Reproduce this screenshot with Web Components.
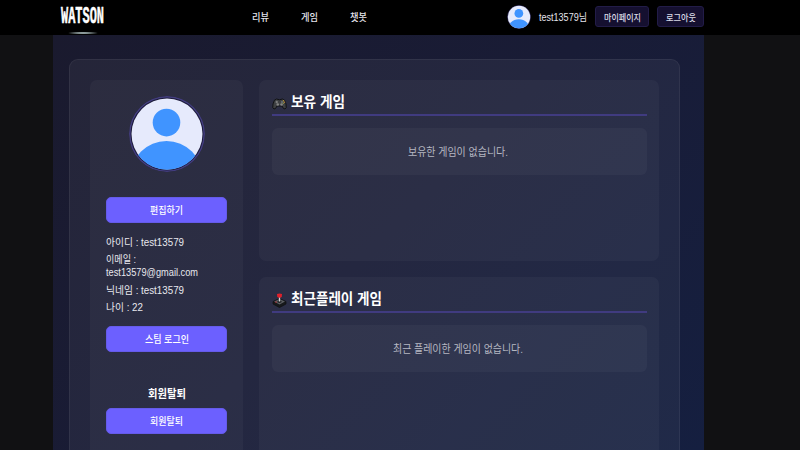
<!DOCTYPE html>
<html lang="ko">
<head>
<meta charset="utf-8">
<title>WATSON</title>
<style>
body{margin:0;width:800px;height:450px;overflow:hidden;background:#111113;color:#e4e4ec;font-family:"Liberation Sans","Noto Sans CJK KR",sans-serif}
</style>
</head>
<body>
<watson-app></watson-app>
<script>
const define = (name, html, setup) => customElements.define(name, class extends HTMLElement {
  connectedCallback() {
    if (this.shadowRoot) return;
    const t = document.createElement('template');
    t.innerHTML = html;
    this.attachShadow({mode: 'open'}).append(t.content.cloneNode(true));
    if (setup) setup(this, this.shadowRoot);
  }
});

// A line of text condensed horizontally to the width in "w".
define('fit-text', `<style>
:host{display:inline-block;flex:none;white-space:nowrap;line-height:14px;height:14px}
span{display:inline-block;transform-origin:0 50%;line-height:inherit}
</style><span><slot></slot></span>`, (el, root) => {
  const w = +el.getAttribute('w'), s = root.querySelector('span');
  el.style.width = w + 'px';
  s.style.transform = `translateY(1px) scale(${w / s.getBoundingClientRect().width},${el.getAttribute('sy') || 1})`;
});

define('user-avatar', `<style>
:host{display:block;flex:none;box-sizing:border-box;border-radius:50%;overflow:hidden}
svg{display:block;width:100%;height:100%}
</style><svg viewBox="0 0 76 76">
<defs><clipPath id="c"><circle cx="38" cy="38" r="35.7"/></clipPath></defs>
<circle cx="38" cy="38" r="37.2" fill="#1c1b3a" stroke="#433d80" stroke-width="1.5"/>
<circle cx="38" cy="38" r="35.5" fill="#e6eafc"/>
<g clip-path="url(#c)" fill="#4094ff"><circle cx="37.500" cy="26.6" r="13.8"/><circle cx="37.500" cy="81" r="36"/></g>
</svg>`);

define('nav-button', `<style>
:host{display:flex;box-sizing:border-box;height:21px;align-items:center;justify-content:center;background:#151030;border:1px solid #221c48;border-radius:3px;color:#dcdce8;font-size:9.5px;font-weight:500}
</style><slot></slot>`);

define('site-header', `<style>
:host{display:flex;position:relative;box-sizing:border-box;height:35px;background:#000;align-items:center;flex:none}
.logo{margin-left:60.5px;width:43.5px;height:20px;margin-top:-5px;color:#fff;font:bold 14px/20px "Liberation Mono",monospace}
.logo fit-text{height:20px;line-height:20px;-webkit-text-stroke:.3px #fff}
.glow{position:absolute;left:66px;top:32px;width:34px;height:2px;background:radial-gradient(closest-side,#fff,#8c9a9a 50%,transparent)}
nav{display:flex;margin-left:148px;margin-top:-1px;gap:32px;font-size:10px;width:255px;font-weight:500}
.user{display:flex;align-items:center;gap:8px;margin-top:-2px}
user-avatar{width:24px;height:24px}
.name{font-size:10px}
</style>
<div class="logo"><fit-text w="43" sy="1.75">WATSON</fit-text></div><i class="glow"></i>
<nav><fit-text w="17">리뷰</fit-text><fit-text w="17">게임</fit-text><fit-text w="17">챗봇</fit-text></nav>
<div class="user"><user-avatar></user-avatar><fit-text class="name" w="48">test13579님</fit-text>
<nav-button style="width:54px"><fit-text w="37">마이페이지</fit-text></nav-button>
<nav-button style="width:47px"><fit-text w="30">로그아웃</fit-text></nav-button></div>`);

define('action-button', `<style>
:host{display:flex;box-sizing:border-box;height:26px;width:121px;align-items:center;justify-content:center;background:#6c60ff;border:1px solid #655be9;border-radius:5px;color:#fff;font-size:10px;font-weight:500}
</style><slot></slot>`);

define('profile-card', `<style>
:host{display:flex;flex-direction:column;align-items:center;box-sizing:border-box;width:153px;height:500px;padding-top:16px;background:rgba(255,255,255,.035);border-radius:7px}
user-avatar{width:76px;height:76px;margin-bottom:24.5px}
.info{display:flex;flex-direction:column;width:121px;margin:11.5px 0 13px;font-size:10.5px;gap:3.5px;color:#e8e8ee}
.mail{display:flex;flex-direction:column;margin-bottom:.5px;gap:0}
.mail fit-text{height:13px;line-height:13px}
h3{margin:34px 0 8px;font-size:11.5px;line-height:14px;height:14px;color:#fff;font-weight:700}
</style>
<user-avatar></user-avatar>
<action-button><fit-text w="33">편집하기</fit-text></action-button>
<div class="info"><fit-text w="78">아이디 : test13579</fit-text>
<div class="mail"><fit-text w="30">이메일 :</fit-text><fit-text w="92">test13579@gmail.com</fit-text></div>
<fit-text w="78">닉네임 : test13579</fit-text><fit-text w="37">나이 : 22</fit-text></div>
<action-button><fit-text w="44">스팀 로그인</fit-text></action-button>
<h3><fit-text w="38">회원탈퇴</fit-text></h3>
<action-button><fit-text w="33">회원탈퇴</fit-text></action-button>`);

define('game-section', `<style>
:host{display:block;box-sizing:border-box;width:400px;height:181px;padding:12px 12.5px;background:rgba(255,255,255,.035);border-radius:7px}
header{display:flex;align-items:center;gap:4px;box-sizing:border-box;height:24px;padding-bottom:4px;border-bottom:2px solid #403b80;font-size:15px;font-weight:700;color:#fff}
::slotted(svg){display:block;width:15px;height:15px;margin-top:4px}
.empty{display:flex;align-items:center;justify-content:center;box-sizing:border-box;height:47px;padding:0 2px 1px 0;margin-top:12px;border-radius:6px;background:rgba(255,255,255,.035);color:#b6b8c2;font-size:11px}
</style><header><slot name="icon"></slot><slot name="title"></slot></header><div class="empty"><slot></slot></div>`);

define('watson-app', `<style>
:host{display:flex;flex-direction:column;width:800px;height:450px;overflow:hidden}
main{flex:1;min-height:0;box-sizing:border-box;margin-left:53px;width:651px;padding:24px 24px 0 16px;overflow:hidden;background:linear-gradient(135deg,#1a1a2e 0%,#191c36 50%,#151f40 100%)}
.panel{display:flex;gap:16px;box-sizing:border-box;width:611px;height:550px;padding:20px;border:1px solid rgba(255,255,255,.06);border-radius:9px;background:rgba(255,255,255,.05)}
.games{display:flex;flex-direction:column;gap:16px}
.panel fit-text[slot]{line-height:18px;height:18px}
</style>
<site-header></site-header>
<main><div class="panel"><profile-card></profile-card><div class="games">
<game-section>
<svg slot="icon" viewBox="0 0 30 30"><path d="M9 6Q15 9 21 6Q26 6 28 16Q30 25 26 26Q23 27 20 20H10Q7 27 4 26Q0 25 2 16Q4 6 9 6Z" fill="#3e4042" stroke="#111214" stroke-width="2"/><path d="M7 12h5M9.500 9.500v5" stroke="#858585" stroke-width="2"/><circle cx="11.500" cy="17" r="2.500" fill="#858585"/><circle cx="19" cy="17" r="2.500" fill="#858585"/><circle cx="20" cy="12" r="1.500" fill="#8d9bab"/><circle cx="23" cy="9.500" r="1.500" fill="#b89b3c"/><circle cx="25" cy="12.500" r="1.500" fill="#b8803c"/><circle cx="22.500" cy="14.500" r="1.500" fill="#889550"/></svg>
<fit-text slot="title" w="54">보유 게임</fit-text>
<fit-text w="100">보유한 게임이 없습니다.</fit-text></game-section>
<game-section>
<svg slot="icon" viewBox="0 0 30 30"><path d="M2 17L15 11L28 17V22L15 29L2 22Z" fill="#17191b" stroke="#101113" stroke-width="1.500" stroke-linejoin="round"/><path d="M4 17L15 12L26 17L15 23Z" fill="#5b5e62"/><ellipse cx="15" cy="17.500" rx="4.500" ry="2.300" fill="#202224"/><path d="M15 17V8" stroke="#d4d6da" stroke-width="2.600"/><path d="M10 2Q15 0 20 2L19.500 8Q15 11 10.500 8Z" fill="#e0202b"/><ellipse cx="8" cy="18" rx="2" ry="1.200" fill="#b9202b"/></svg>
<fit-text slot="title" w="91">최근플레이 게임</fit-text>
<fit-text w="130">최근 플레이한 게임이 없습니다.</fit-text></game-section>
</div></div></main>`);
</script>
</body>
</html>
